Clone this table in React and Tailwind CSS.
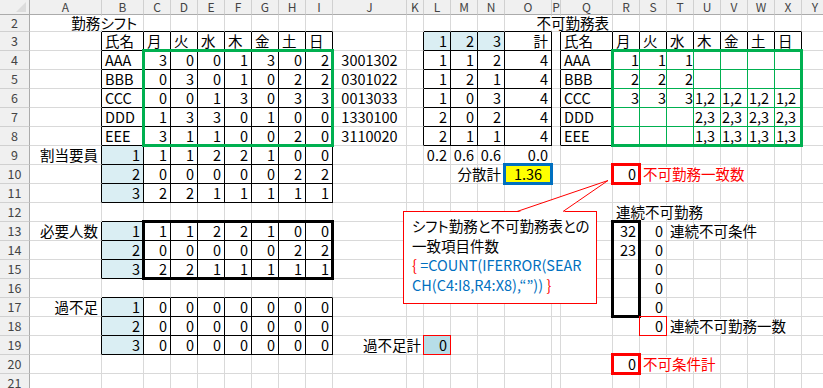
import React from 'react';

const COLS = 'ABCDEFGHIJKLMNOPQRSTUVWXY';
const ci = (L) => COLS.indexOf(L) + 1;
const DAYS = ['月', '火', '水', '木', '金', '土', '日'];

const data = {};
function put(col, row, v, o = {}) {
  data[`${ci(col)}_${row}`] = { v: String(v), align: typeof v === 'number' ? 'r' : 'l', ...o };
}
function putRow(col, row, arr, o = {}) {
  const s = ci(col) - 1;
  arr.forEach((v, i) => {
    if (v === null || v === undefined) return;
    put(COLS[s + i], row, v, o);
  });
}

const BLUE = 'bg-[#daeef3]';
put('B', 2, '勤務シフト', { align: 'r', pad: 'pr-[6px]', ov: true, palt: true });
put('Q', 2, '不可勤務表', { align: 'r', ov: true });
put('B', 3, '氏名');
putRow('C', 3, DAYS);
putRow('L', 3, [1, 2, 3], { bg: BLUE });
put('O', 3, '計', { align: 'r' });
put('Q', 3, '氏名');
putRow('R', 3, DAYS);

const shift = [
  ['AAA', [3, 0, 0, 1, 3, 0, 2], '3001302', [1, 1, 2, 4], [1, 1, 1, null, null, null, null]],
  ['BBB', [0, 3, 0, 1, 0, 2, 2], '0301022', [1, 2, 1, 4], [2, 2, 2, null, null, null, null]],
  ['CCC', [0, 0, 1, 3, 0, 3, 3], '0013033', [1, 0, 3, 4], [3, 3, 3, '1,2', '1,2', '1,2', '1,2']],
  ['DDD', [1, 3, 3, 0, 1, 0, 0], '1330100', [2, 0, 2, 4], [null, null, null, '2,3', '2,3', '2,3', '2,3']],
  ['EEE', [3, 1, 1, 0, 0, 2, 0], '3110020', [2, 1, 1, 4], [null, null, null, '1,3', '1,3', '1,3', '1,3']],
];
shift.forEach(([name, vals, code, cnt, ng], i) => {
  const r = 4 + i;
  put('B', r, name);
  putRow('C', r, vals);
  put('J', r, code, { align: 'c' });
  putRow('L', r, cnt);
  put('Q', r, name);
  putRow('R', r, ng, { pad: 'pl-[1px]' });
});

const alloc = [
  [1, 1, 2, 2, 1, 0, 0],
  [0, 0, 0, 0, 0, 2, 2],
  [2, 2, 1, 1, 1, 1, 1],
];
alloc.forEach((a, i) => {
  put('B', 9 + i, i + 1, { bg: BLUE });
  putRow('C', 9 + i, a);
  put('B', 13 + i, i + 1, { bg: BLUE });
  putRow('C', 13 + i, a);
  put('B', 17 + i, i + 1, { bg: BLUE });
  putRow('C', 17 + i, [0, 0, 0, 0, 0, 0, 0]);
});
put('A', 9, '割当要員', { align: 'r' });
put('A', 13, '必要人数', { align: 'r' });
put('A', 17, '過不足', { align: 'r' });
putRow('L', 9, ['0.2', '0.6', '0.6', '0.0'], { align: 'r' });
put('N', 10, '分散計', { align: 'r', ov: true });
put('O', 10, '1.36', { align: 'c', bg: 'bg-[#ffff00]' });
put('R', 10, 0);
put('S', 10, '不可勤務一致数', { ov: true, color: 'text-[#ff0000]' });
put('R', 12, '連続不可勤務', { ov: true });
put('R', 13, 32);
put('R', 14, 23);
[13, 14, 15, 16, 17, 18].forEach((r) => put('S', r, 0));
put('T', 13, '連続不可条件', { ov: true });
put('T', 18, '連続不可勤務一数', { ov: true });
put('K', 19, '過不足計', { align: 'r', ov: true, pad: 'pr-[2px]' });
put('L', 19, 0, { bg: 'bg-[#b7dee8]' });
put('R', 20, 0);
put('S', 20, '不可条件計', { ov: true, color: 'text-[#ff0000]' });

const rng = ([a, r1, b, r2]) => [ci(a), r1, ci(b), r2];
const BLACK = [
  ['B', 3, 'I', 11],
  ['B', 13, 'I', 15],
  ['B', 17, 'I', 19],
  ['L', 3, 'O', 8],
  ['Q', 3, 'X', 8],
].map(rng);
const GREEN = rng(['R', 4, 'X', 8]);
const inR = (c, r, [c1, r1, c2, r2]) => c >= c1 && c <= c2 && r >= r1 && r <= r2;
const inBlack = (c, r) => BLACK.some((g) => inR(c, r, g));
function rEdge(c, r) {
  if (inR(c, r, GREEN) && inR(c + 1, r, GREEN)) return 'border-r-[#00b050]';
  if (inBlack(c, r) || inBlack(c + 1, r)) return 'border-r-black';
  return 'border-r-[#d9d9d9]';
}
function bEdge(c, r) {
  if (inR(c, r, GREEN) && inR(c, r + 1, GREEN)) return 'border-b-[#00b050]';
  if (inBlack(c, r) || inBlack(c, r + 1)) return 'border-b-black';
  return 'border-b-[#d9d9d9]';
}

const THICK_GREEN = 'border-[3px] border-[#00b050] -ml-[2px] -mt-[2px] -mr-[1px] -mb-[1px]';
const THICK_BLACK = 'border-[3px] border-black -ml-[2px] -mt-[2px] -mr-[1px] -mb-[1px]';
const THICK_RED = 'border-[3px] border-[#ff0000] -ml-[2px] -mt-[2px] -mr-[1px] -mb-[1px]';
const THICK_BLUE = 'border-[3px] border-[#0070c0] -ml-[2px] -mt-[2px] -mr-[1px] -mb-[1px]';
const THIN_RED = 'border border-[#ff0000] -ml-px -mt-px';
const OVERLAYS = [
  ['C', 4, 'I', 8, THICK_GREEN],
  ['R', 4, 'X', 8, THICK_GREEN],
  ['C', 13, 'I', 15, THICK_BLACK],
  ['R', 13, 'R', 17, THICK_BLACK],
  ['R', 10, 'R', 10, THICK_RED],
  ['R', 20, 'R', 20, THICK_RED],
  ['O', 10, 'O', 10, THICK_BLUE],
  ['S', 18, 'S', 18, THIN_RED],
  ['L', 19, 'L', 19, THIN_RED],
];

function Cell({ c, r }) {
  const d = data[`${c}_${r}`];
  const align = !d
    ? ''
    : d.align === 'r'
    ? `justify-end ${d.pad || 'pr-[3px]'}`
    : d.align === 'c'
    ? 'justify-center'
    : `justify-start ${d.pad || 'pl-[3px]'}`;
  return (
    <div
      className={`flex items-center border-r border-b leading-none ${rEdge(c, r)} ${bEdge(c, r)} ${d?.bg || ''} ${align}`}
      style={{ gridColumn: c + 1, gridRow: r }}
    >
      {d && (
        <span
          className={`relative z-10 shrink-0 whitespace-nowrap ${d.color || ''} ${d.ov ? 'bg-white' : ''} ${
            d.palt ? "[font-feature-settings:'palt']" : ''
          }`}
        >
          {d.v}
        </span>
      )}
    </div>
  );
}

export default function App() {
  const rows = [];
  for (let r = 2; r <= 21; r++) rows.push(r);
  const cols = [];
  for (let c = 1; c <= 25; c++) cols.push(c);

  return (
    <div className="relative w-[823px] h-[388px] overflow-hidden bg-white text-black text-[14.5px] font-['Noto_Sans_CJK_JP',sans-serif]">
      <div className="grid grid-cols-[30px_72px_42px_repeat(7,27px)_74px_17px_repeat(3,27px)_47px_9px_52px_repeat(8,27px)] grid-rows-[15px_17px_repeat(19,19px)]">
        {/* corner */}
        <div className="relative border-r border-b border-r-[#ababab] border-b-[#ababab] bg-[#f0f0f0]" style={{ gridColumn: 1, gridRow: 1 }}>
          <svg width="30" height="15" className="block">
            <polygon points="26,2 26,12 16,12" fill="#dcdcdc" />
          </svg>
        </div>
        {cols.map((c) => (
          <div
            key={`h${c}`}
            className="flex items-center justify-center border-r border-b border-r-[#d0d0d0] border-b-[#ababab] bg-[#f0f0f0] text-[#444] text-[12px] leading-none"
            style={{ gridColumn: c + 1, gridRow: 1 }}
          >
            {COLS[c - 1]}
          </div>
        ))}
        {rows.map((r) => (
          <div
            key={`rh${r}`}
            className="flex items-center justify-center border-r border-b border-r-[#ababab] border-b-[#d0d0d0] bg-[#f0f0f0] text-[#444] text-[12.5px] leading-none"
            style={{ gridColumn: 1, gridRow: r }}
          >
            {r}
          </div>
        ))}
        {rows.map((r) => cols.map((c) => <Cell key={`${c}_${r}`} c={c} r={r} />))}
        {OVERLAYS.map(([a, r1, b, r2, cls], i) => (
          <div
            key={`o${i}`}
            className={`relative z-20 pointer-events-none ${cls}`}
            style={{ gridColumn: `${ci(a) + 1} / ${ci(b) + 2}`, gridRow: `${r1} / ${r2 + 1}` }}
          />
        ))}
      </div>

      {/* callout */}
      <div className="absolute left-[403px] top-[211px] z-30 w-[194px] h-[93px] border border-[#ff0000] bg-white pl-[8px] pt-[4px] text-[14.5px] leading-[19.5px] whitespace-nowrap">
        <div className="[font-feature-settings:'palt']">シフト勤務と不可勤務表との</div>
        <div>一致項目件数</div>
        <div>
          <span className="text-[#ff0000]">{'{'}</span>
          <span className="text-[#0070c0]"> =COUNT(IFERROR(SEAR</span>
        </div>
        <div>
          <span className="text-[#0070c0]">CH(C4:I8,R4:X8),“”)) </span>
          <span className="text-[#ff0000]">{'}'}</span>
        </div>
      </div>
      <svg className="absolute left-0 top-0 z-30 pointer-events-none" width="823" height="388">
        <polygon points="517,212.5 608,180.5 563,212.5" fill="#ffffff" />
        <line x1="517" y1="211.5" x2="608" y2="180.5" stroke="#ff0000" strokeWidth="1" />
        <line x1="563" y1="211.5" x2="608" y2="180.5" stroke="#ff0000" strokeWidth="1" />
      </svg>
    </div>
  );
}
